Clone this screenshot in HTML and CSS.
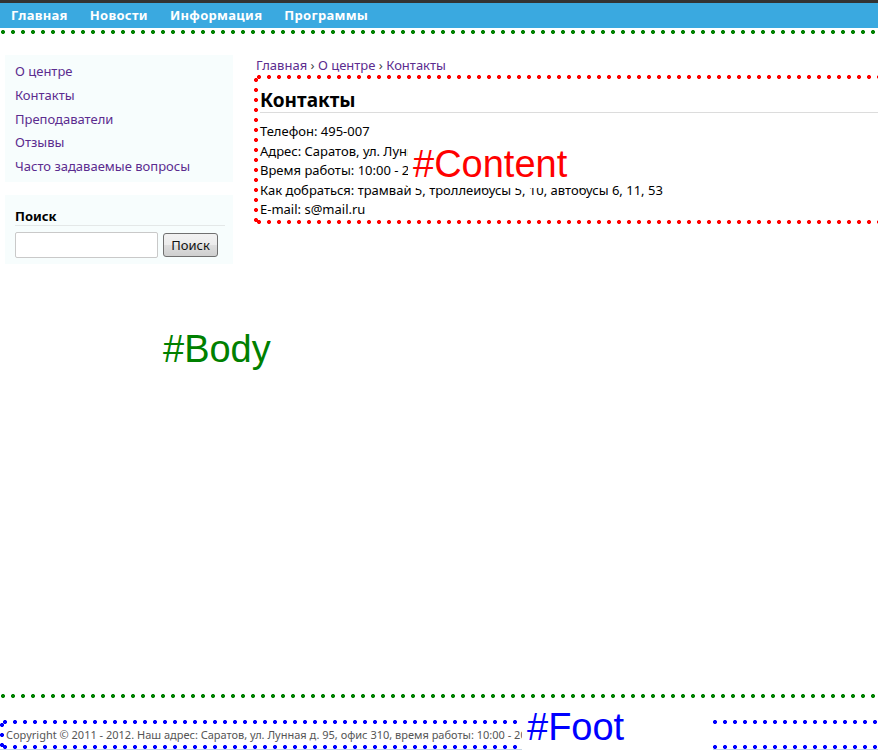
FILE: index.html
```html
<!DOCTYPE html>
<html lang="ru">
<head>
<meta charset="utf-8">
<title>Контакты</title>
<link rel="stylesheet" href="styles.css">
</head>
<body>
<div class="top">
  <a class="nav-item" href="#">Главная</a>
  <a class="nav-item" href="#">Новости</a>
  <a class="nav-item" href="#">Информация</a>
  <a class="nav-item" href="#">Программы</a>
</div>
<div class="body">
  <div class="sidebar">
    <div class="menu">
      <a class="menu-link" href="#">О центре</a>
      <a class="menu-link" href="#">Контакты</a>
      <a class="menu-link" href="#">Преподаватели</a>
      <a class="menu-link" href="#">Отзывы</a>
      <a class="menu-link" href="#">Часто задаваемые вопросы</a>
    </div>
    <div class="search">
      <div class="search-title">Поиск</div>
      <div class="search-row">
        <input class="search-input" type="text">
        <button class="search-btn">Поиск</button>
      </div>
    </div>
  </div>
  <div class="main">
    <div class="crumbs"><a class="crumb" href="#">Главная</a> <span class="sep">›</span> <a class="crumb" href="#">О центре</a> <span class="sep">›</span> <a class="crumb" href="#">Контакты</a></div>
    <div class="content">
      <h1 class="title">Контакты</h1>
      <div class="info">
        <div>Телефон: 495-007</div>
        <div>Адрес: Саратов, ул. Лунная д. 95, офис 310</div>
        <div>Время работы: 10:00 - 20:00</div>
        <div>Как добраться: трамвай 5, троллейбусы 5, 10, автобусы 6, 11, 53</div>
        <div>E-mail: s@mail.ru</div>
      </div>
      <div class="label label-content">#Content</div>
    </div>
  </div>
  <div class="label label-body">#Body</div>
</div>
<div class="foot">
  <div class="foot-text">Copyright © 2011 - 2012. Наш адрес: Саратов, ул. Лунная д. 95, офис 310, время работы: 10:00 - 20:00</div>
  <div class="label label-foot">#Foot</div>
</div>
</body>
</html>
```
FILE: styles.css
```css
html, body {
  margin: 0;
  padding: 0;
  background: #fff;
  overflow: hidden;
}
body {
  font-family: "Noto Sans", "Open Sans", sans-serif;
  font-size: 13px;
  color: #000;
}
a { text-decoration: none; }

.top {
  border-top: 3px solid #333;
  background: #3aa9e0;
  height: 25px;
  display: flex;
  align-items: center;
  margin-bottom: 2px;
}
.nav-item {
  color: #fff;
  font-weight: bold;
  font-size: 13px;
  letter-spacing: 0.3px;
  padding: 0 11px;
  line-height: 25px;
}

.body {
  position: relative;
  height: 668px;
  box-sizing: border-box;
  padding: 25px 0 4px 5px;
  display: flex;
  align-items: flex-start;
  background-image:
    radial-gradient(circle at 3px 2px, #008000 1.7px, transparent 2.3px),
    radial-gradient(circle at 3px 2px, #008000 1.7px, transparent 2.3px);
  background-size: 10px 4px, 10px 4px;
  background-repeat: repeat-x, repeat-x;
  background-position: 0 0, 0 100%;
}

.sidebar {
  width: 228px;
  flex: none;
}
.menu {
  background: #f7fdfd;
  padding: 5px 0 3px 10px;
  display: flex;
  flex-direction: column;
}
.menu-link {
  color: #5b2c8f;
  line-height: 23.8px;
}
.search {
  margin-top: 13px;
  background: #f7fdfd;
  padding: 12px 8px 6px 10px;
}
.search-title {
  font-weight: bold;
  line-height: 18px;
  border-bottom: 1px solid #e4e8e8;
}
.search-row {
  margin-top: 6px;
  display: flex;
  align-items: center;
  gap: 5px;
}
.search-input {
  width: 143px;
  height: 26px;
  box-sizing: border-box;
  border: 1px solid #c9c9c9;
  border-radius: 2px;
  background: #fff;
  margin: 0;
}
.search-btn {
  width: 55px;
  height: 24px;
  box-sizing: border-box;
  border: 1px solid #707070;
  border-radius: 3px;
  background: linear-gradient(#f2f2f2, #ebebeb 50%, #dddddd 51%, #cfcfcf);
  font-family: "Noto Sans", "Open Sans", sans-serif;
  font-size: 13px;
  color: #111;
  padding: 0;
  margin: 0;
}

.main {
  flex: 1;
  margin-left: 21px;
  min-width: 0;
}
.crumbs {
  line-height: 20px;
  padding-left: 2px;
  color: #333;
  white-space: nowrap;
}
.crumb { color: #5b2c8f; }
.sep { color: #444; }

.content {
  position: relative;
  padding: 14px 0 4px 6px;
  margin-right: -20px;
  background-image:
    radial-gradient(circle at 5px 2px, #ff0000 1.7px, transparent 2.3px),
    radial-gradient(circle at 2px 5px, #ff0000 1.7px, transparent 2.3px),
    radial-gradient(circle at 5px 2px, #ff0000 1.7px, transparent 2.3px);
  background-size: 10px 4px, 4px 10px, 10px 4px;
  background-repeat: repeat-x, repeat-y, repeat-x;
  background-position: 0 0, 0 0, 0 100%;
}
.title {
  margin: 0;
  font-size: 19px;
  font-weight: bold;
  line-height: 22px;
  padding-bottom: 1px;
  border-bottom: 1px solid #dcdcdc;
}
.info {
  margin-top: 9px;
  line-height: 19.5px;
  white-space: nowrap;
}

.label {
  position: absolute;
  font-family: "Liberation Sans", Arial, sans-serif;
  font-size: 38px;
  line-height: 38px;
  white-space: nowrap;
}
.label-content {
  left: 154px;
  top: 65px;
  width: 204px;
  height: 48px;
  line-height: 48px;
  box-sizing: border-box;
  padding-left: 5px;
  background: #fff;
  color: #ff0000;
}
.label-body {
  left: 163px;
  top: 300px;
  color: #008000;
}

.foot {
  position: relative;
  margin-top: 22px;
  height: 29px;
  border-bottom: 1px solid #c6d6e6;
  box-sizing: content-box;
  background-image:
    radial-gradient(circle at 5px 2px, #0000ff 1.7px, transparent 2.3px),
    radial-gradient(circle at 2px 5px, #0000ff 1.7px, transparent 2.3px),
    radial-gradient(circle at 5px 2px, #0000ff 1.7px, transparent 2.3px);
  background-size: 10px 4px, 4px 10px, 10px 4px;
  background-repeat: repeat-x, repeat-y, repeat-x;
  background-position: 0 0, 0 0, 0 100%;
}
.foot-text {
  padding: 7px 0 0 6px;
  font-size: 11px;
  line-height: 15px;
  color: #555;
  white-space: nowrap;
}
.label-foot {
  left: 522px;
  top: -12px;
  width: 191px;
  height: 50px;
  box-sizing: border-box;
  padding-left: 5px;
  background: #fff;
  color: #0000ff;
}
```
